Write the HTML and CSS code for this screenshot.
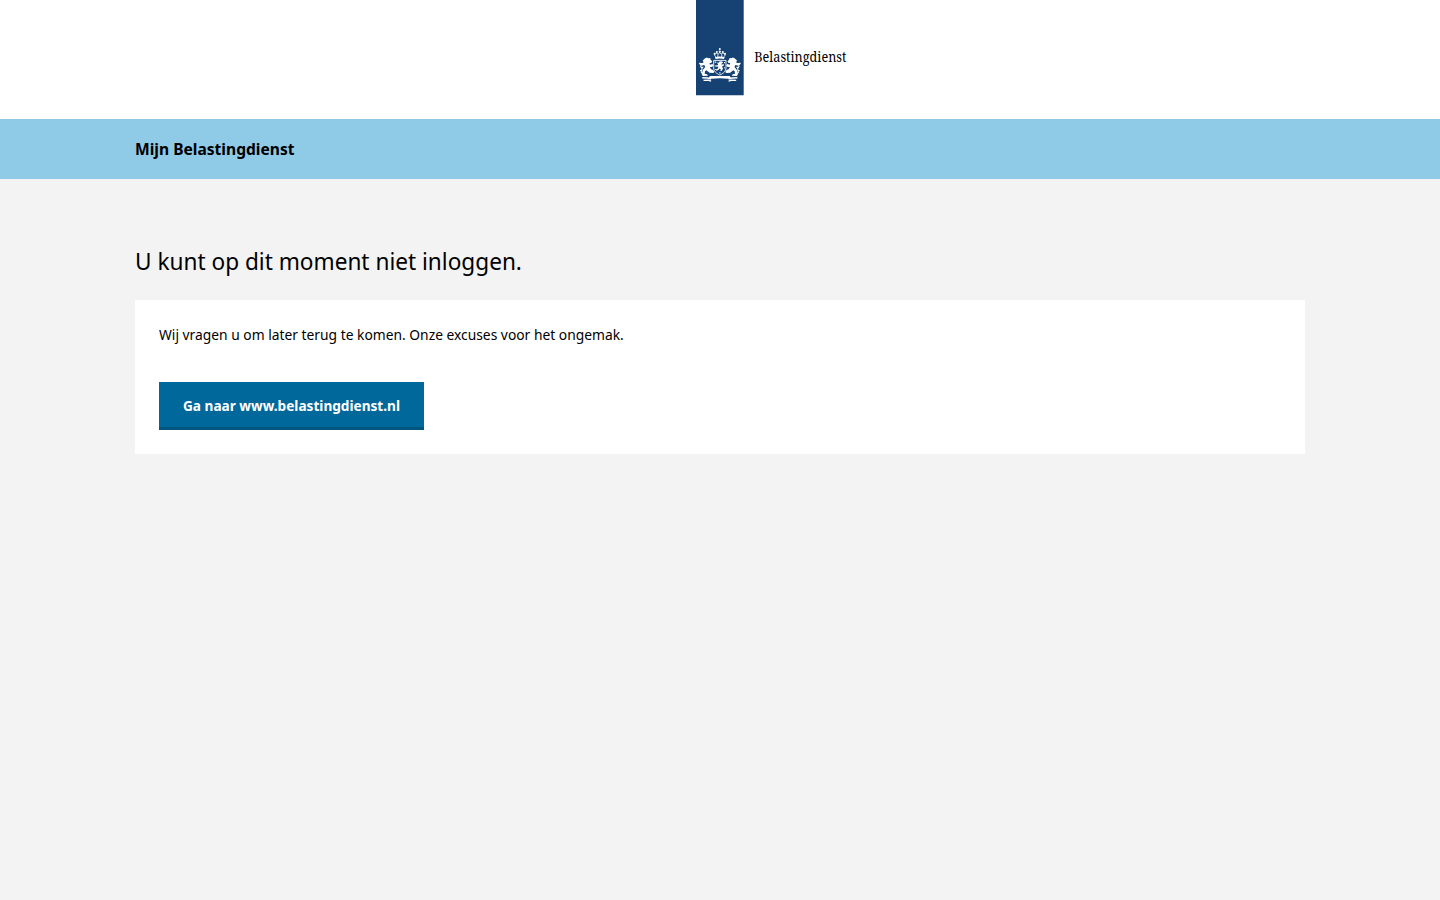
FILE: index.html
```html
<!DOCTYPE html>
<html lang="nl">
<head>
<meta charset="utf-8">
<title>Mijn Belastingdienst</title>
<link rel="stylesheet" href="styles.css">
</head>
<body>
<header class="header">
  <svg class="logo" viewBox="0 0 160 96" role="img" aria-label="Belastingdienst">
    <path class="logo-ribbon" d="M0 0h47.7v95.2H0z"/>
    <g class="arms">
      <circle cx="23.8" cy="49" r="1"/>
      <circle cx="23.8" cy="51.6" r="1.1"/>
      <circle cx="20.8" cy="52" r="1"/><circle cx="26.8" cy="52" r="1"/>
      <circle cx="18.6" cy="53.8" r="1"/><circle cx="29" cy="53.8" r="1"/>
      <path class="line" d="M19.6 56.8c-2.6-2.6.6-4.4 2.6-3.2M28 56.8c2.6-2.6-.6-4.4-2.6-3.2M22 57c-.6-2 .2-3.4 1.8-4.4 1.6 1 2.4 2.4 1.8 4.4"/>
      <path d="M19 56.9q4.8-1 9.6 0l-.6 2.1q-4.2-.8-8.4 0z"/>
      <path class="line" d="M17.7 60.4h12.3v7.5c0 3.2-2.6 5.5-6.2 7.2-3.6-1.7-6.1-4-6.1-7.2z"/>
      <path d="M21 62.6l1.7.2.6-1.4 2.6-.2 1.2 1.6-1.7.9.2 1 1.9-.6.6 1.2-2 1.2.9 2.2-1.4 2.4-1.4-.3.6-1.5-1.3-.9-1.1 1.7-2.2.6-.3-1.1 1.6-.6 1-2.5-2.3.2-.3-1.2 2.2-.6-.2-1z"/>
      <path d="M18.8 61.6h1.4v1.2h-1.4zM28 61.9h1v1.3h-1zM18.9 65.4h1v1.1h-1zM28.2 67.2h.9v1.4h-.9zM19.2 69h1.1v1.1h-1.1zM23.3 72.3h1.2v1.2h-1.2z"/>
      <g id="lion">
        <path d="M8.8 58.6l2-1.2 1.6.9 1.8-.3.3 1.6 1.7 1.7-1 1.6-1.7.2.5 1.6 2.4-.6 1 1.2-1.2 1.6-2.4.2 1.3 2.1 2 .9 1.3 1.9-1 .9-3.9-.1-3-2.6-1.5 1.1-.3 2.5 2.3.4 1 1.6-5.2.1-1-1.6 1-4.2 2.4-3.1-.9-1.9-3.3.6-1.8-1.6.5-1.4 1.8.6 2.1-.8-.9-1.9z"/>
        <path class="tail" d="M7 73.5c-3-.7-1.5-3-1-4.3.5-1.6-2.4-1.6-.9-3.9M3.2 63.2l3.3.7M4.1 70.6l2 .7M7.3 67.4l-2.1-.3"/>
      </g>
      <use href="#lion" transform="matrix(-1 0 0 1 47.7 0)"/>
      <path d="M14 76.1h19.7l1.6 2.3-3.6.4q-7.9-1.1-15.8 0l-3.6-.4z"/>
      <path class="ribbon" d="M6.3 77.8l5.4.2 3.4 1M7.5 80.4l4.6-.2 3 1M41.4 77.8l-5.4.2-3.4 1M40.2 80.4l-4.6-.2-3 1"/>
    </g>
    <text class="logo-name" x="58.3" y="61.7" textLength="92.2" lengthAdjust="spacingAndGlyphs">Belastingdienst</text>
  </svg>
</header>
<div class="titlebar"><div class="container"><span class="site-title">Mijn Belastingdienst</span></div></div>
<main class="container">
  <h1 class="heading">U kunt op dit moment niet inloggen.</h1>
  <section class="panel">
    <p class="message">Wij vragen u om later terug te komen. Onze excuses voor het ongemak.</p>
    <a class="button" href="#"><span class="button-label">Ga naar www.belastingdienst.nl</span></a>
  </section>
</main>
</body>
</html>
```
FILE: styles.css
```css
* { box-sizing: border-box; }
body { margin: 0; background: #f3f3f3; color: #000; font-family: "Noto Sans", sans-serif; }
.header { height: 119px; padding-left: 696px; background: #fff; }
.logo { display: block; width: 160px; height: 96px; }
.logo-ribbon { fill: #154273; }
.logo-name { font: 13.5px "Noto Serif", "Liberation Serif", serif; fill: #000; }
.arms { fill: #fff; }
.line { fill: none; stroke: #fff; stroke-width: .9; }
.tail, .ribbon { fill: none; stroke: #fff; stroke-width: 1.1; }
.ribbon { stroke-width: 1.4; }
.container { width: 1170px; margin: 0 auto; }
.titlebar { height: 60px; background: #8fcae7; }
.site-title, .heading, .message, .button-label { transform-origin: left; white-space: nowrap; }
.site-title { display: block; font-size: 16.5px; font-weight: 700; line-height: 60px; transform: scaleX(.944); }
.heading { margin: 0; padding-top: 64px; font-size: 24px; font-weight: 400; line-height: 36px; transform: scaleX(.942); }
.panel { height: 154px; margin-top: 21px; padding: 22px 24px 24px; background: #fff; }
.message { margin: 0 0 36px; font-size: 15px; line-height: 24px; transform: scaleX(.921); }
.button { display: block; width: 265px; height: 48px; padding-left: 24px; border-bottom: 3px solid #01567f; background: #01689b; color: #fff; font-size: 15px; font-weight: 700; line-height: 46px; text-decoration: none; }
.button-label { display: block; transform: scaleX(.908); }
```
